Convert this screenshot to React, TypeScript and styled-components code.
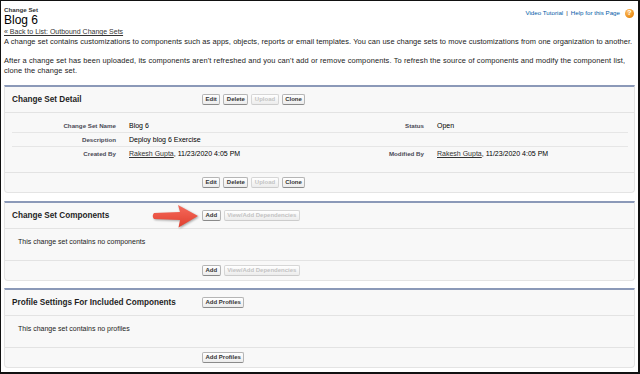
import React from 'react';
import styled, { createGlobalStyle } from 'styled-components';

const GlobalStyle = createGlobalStyle`
  html, body {
    margin: 0;
    padding: 0;
    background: #ffffff;
  }
  body {
    font-family: "Liberation Sans", Arial, sans-serif;
  }
`;

// Page frame

const Frame = styled.div`
  box-sizing: border-box;
  width: 640px;
  height: 374px;
  border-style: solid;
  border-color: #111111;
  border-width: 1px 2px 2px 1px;
  padding: 5px 3px 0 3px;
  background: #ffffff;
  overflow: hidden;
`;

const TopBar = styled.div`
  display: flex;
  justify-content: space-between;
  align-items: flex-start;
`;

const TitleBlock = styled.div`
  display: flex;
  flex-direction: column;
`;

const Eyebrow = styled.div`
  font-size: 6.2px;
  line-height: 8px;
  font-weight: bold;
  color: #333333;
`;

const PageTitle = styled.h1`
  margin: 0;
  font-size: 12px;
  line-height: 13px;
  font-weight: normal;
  color: #000000;
`;

const BackLink = styled.a`
  font-size: 7px;
  line-height: 9px;
  color: #333333;
  text-decoration: underline;
`;

const HelpLinks = styled.div`
  display: flex;
  align-items: center;
  gap: 3px;
  margin-top: 2px;
  margin-right: 1px;
  font-size: 6.2px;
  line-height: 10px;
  color: #015ba7;
`;

const Divider = styled.span`
  color: #333333;
`;

const HelpIcon = styled.span`
  display: inline-flex;
  align-items: center;
  justify-content: center;
  width: 9px;
  height: 9px;
  margin-left: 2px;
  border-radius: 50%;
  background: radial-gradient(circle at 35% 30%, #ffc36b, #e98a12 70%);
  color: #ffffff;
  font-size: 7px;
  font-weight: bold;
`;

const Intro = styled.p<{ $gap?: number; $spacing?: number }>`
  margin: ${(p) => p.$gap ?? 1}px 0 0;
  font-size: 7.45px;
  line-height: 10px;
  letter-spacing: ${(p) => p.$spacing ?? 0}px;
  white-space: nowrap;
  color: #222222;
`;

// Page blocks

const Panel = styled.section<{ $gap: number }>`
  margin-top: ${(p) => p.$gap}px;
  background: #f8f8f8;
  border: 1px solid #e4e4e4;
  border-top: 2px solid #8b99b8;
  border-radius: 0 0 4px 4px;
`;

const PanelHeader = styled.div`
  position: relative;
  display: flex;
  align-items: center;
  height: 25px;
  border-bottom: 1px solid #e3e3e3;
`;

const PanelTitle = styled.h2`
  box-sizing: border-box;
  width: 197px;
  margin: 0;
  padding-left: 7px;
  font-size: 8.2px;
  line-height: 10px;
  font-weight: bold;
  color: #1f1f1f;
`;

const ButtonGroup = styled.div`
  display: flex;
  gap: 3px;
`;

const Button = styled.button<{ $disabled?: boolean }>`
  box-sizing: border-box;
  height: 11px;
  margin: 0;
  padding: 0 2.5px;
  font-family: "Liberation Sans", Arial, sans-serif;
  font-size: 6px;
  line-height: 9px;
  font-weight: bold;
  color: ${(p) => (p.$disabled ? '#c3c3c3' : '#333333')};
  background: linear-gradient(#ffffff, #ececec);
  border: 1px solid ${(p) => (p.$disabled ? '#d6d6d6' : '#b5b5b5')};
  border-bottom-color: ${(p) => (p.$disabled ? '#cccccc' : '#8a8a8a')};
  border-radius: 2px;
`;

const PanelFooter = styled.div`
  box-sizing: border-box;
  display: flex;
  align-items: center;
  height: 20px;
  padding-left: 197px;
  border-top: 1px solid #e3e3e3;
`;

const DetailList = styled.div`
  padding: 6px 6px 12px 7px;
`;

const DetailRow = styled.div`
  display: grid;
  grid-template-columns: 104px 188px 120px 1fr;
  align-items: center;
  height: 13px;
  border-bottom: 1px solid #e6e6e6;

  &:last-child {
    border-bottom: none;
  }
`;

const Label = styled.div`
  text-align: right;
  font-size: 6.2px;
  font-weight: bold;
  color: #4a4a56;
`;

const Value = styled.div`
  padding-left: 13px;
  font-size: 7px;
  color: #000000;
`;

const UserLink = styled.a`
  color: #333333;
  text-decoration: underline;
`;

const EmptyBody = styled.div`
  box-sizing: border-box;
  height: 31px;
  padding: 8px 0 0 13px;
  font-size: 7px;
  line-height: 9px;
  color: #222222;
`;

const Arrow = styled.svg`
  position: absolute;
  left: 145px;
  top: 0;
  width: 51px;
  height: 27px;
  filter: drop-shadow(1px 1.5px 1px rgba(0, 0, 0, 0.35));
`;

const detailButtons = (
  <ButtonGroup>
    <Button>Edit</Button>
    <Button>Delete</Button>
    <Button $disabled>Upload</Button>
    <Button>Clone</Button>
  </ButtonGroup>
);

const componentButtons = (
  <ButtonGroup>
    <Button>Add</Button>
    <Button $disabled>View/Add Dependencies</Button>
  </ButtonGroup>
);

const ChangeSetPage = () => {
  return (
    <>
      <GlobalStyle />
      <Frame>
        <TopBar>
          <TitleBlock>
            <Eyebrow>Change Set</Eyebrow>
            <PageTitle>Blog 6</PageTitle>
            <BackLink>« Back to List: Outbound Change Sets</BackLink>
          </TitleBlock>
          <HelpLinks>
            <span>Video Tutorial</span>
            <Divider>|</Divider>
            <span>Help for this Page</span>
            <HelpIcon>?</HelpIcon>
          </HelpLinks>
        </TopBar>
        <Intro $spacing={0.065}>
          A change set contains customizations to components such as apps, objects, reports or
          email templates. You can use change sets to move customizations from one organization to
          another.
        </Intro>
        <Intro $gap={9} $spacing={0.12}>
          After a change set has been uploaded, its components aren't refreshed and you can't add
          or remove components. To refresh the source of components and modify the component list,
          <br />
          clone the change set.
        </Intro>

        <Panel $gap={9}>
          <PanelHeader>
            <PanelTitle>Change Set Detail</PanelTitle>
            {detailButtons}
          </PanelHeader>
          <DetailList>
            <DetailRow>
              <Label>Change Set Name</Label>
              <Value>Blog 6</Value>
              <Label>Status</Label>
              <Value>Open</Value>
            </DetailRow>
            <DetailRow>
              <Label>Description</Label>
              <Value>Deploy blog 6 Exercise</Value>
              <Label />
              <Value />
            </DetailRow>
            <DetailRow>
              <Label>Created By</Label>
              <Value>
                <UserLink>Rakesh Gupta</UserLink>, 11/23/2020 4:05 PM
              </Value>
              <Label>Modified By</Label>
              <Value>
                <UserLink>Rakesh Gupta</UserLink>, 11/23/2020 4:05 PM
              </Value>
            </DetailRow>
          </DetailList>
          <PanelFooter>{detailButtons}</PanelFooter>
        </Panel>

        <Panel $gap={8}>
          <PanelHeader>
            <PanelTitle>Change Set Components</PanelTitle>
            {componentButtons}
            <Arrow viewBox="0 0 51 27">
              <defs>
                <linearGradient id="arrowFill" x1="0" y1="0" x2="0" y2="1">
                  <stop offset="0" stopColor="#f66a5c" />
                  <stop offset="1" stopColor="#e0402f" />
                </linearGradient>
              </defs>
              <path
                d="M4 10 L30 9 L28 2 L48 13 L28.5 24.5 L30 17 L4 16 Q1.5 13 4 10 Z"
                fill="url(#arrowFill)"
              />
            </Arrow>
          </PanelHeader>
          <EmptyBody>This change set contains no components</EmptyBody>
          <PanelFooter>{componentButtons}</PanelFooter>
        </Panel>

        <Panel $gap={7}>
          <PanelHeader>
            <PanelTitle>Profile Settings For Included Components</PanelTitle>
            <ButtonGroup>
              <Button>Add Profiles</Button>
            </ButtonGroup>
          </PanelHeader>
          <EmptyBody>This change set contains no profiles</EmptyBody>
          <PanelFooter>
            <ButtonGroup>
              <Button>Add Profiles</Button>
            </ButtonGroup>
          </PanelFooter>
        </Panel>
      </Frame>
    </>
  );
};

export default ChangeSetPage;
